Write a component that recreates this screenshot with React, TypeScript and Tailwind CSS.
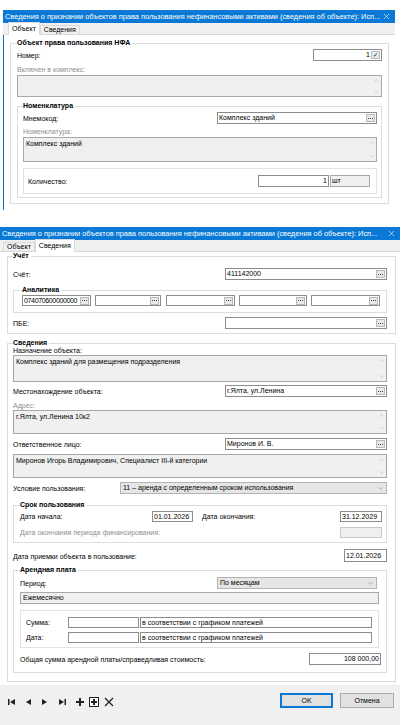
import React from "react";
import { ChevronUp, ChevronDown, X } from "lucide-react";

type Kids = { children?: React.ReactNode; className?: string };

function TitleBar({ text }: { text: string }) {
  return (
    <div className="flex h-[13px] items-center justify-between bg-[#0a79d6] pl-[2px] pr-[4px] text-white">
      <span className="overflow-hidden whitespace-nowrap text-[7.4px] leading-[8px]">{text}</span>
      <X size={9} strokeWidth={1.6} className="shrink-0" />
    </div>
  );
}

function Tabs({ active, offset }: { active: 0 | 1; offset: string }) {
  const tabs = ["Объект", "Сведения"];
  return (
    <div className={`flex h-[12px] items-end border-b border-[#d9d9d9] bg-[#f0f0f0] ${offset}`}>
      {tabs.map((t, i) =>
        i === active ? (
          <div
            key={t}
            className="relative -mb-[1px] flex h-[13px] items-center border border-b-0 border-[#d9d9d9] bg-white px-[3px] leading-[8px]"
          >
            {t}
          </div>
        ) : (
          <div
            key={t}
            className="flex h-[9px] items-center border border-b-0 border-[#d9d9d9] bg-[#f0f0f0] px-[3px] leading-[8px]"
          >
            {t}
          </div>
        )
      )}
    </div>
  );
}

function Group({ title, children, className = "" }: Kids & { title: string }) {
  return (
    <fieldset className={`border border-[#dcdcdc] ${className}`}>
      <legend className="h-[8px] pr-[2px] font-bold leading-[8px]">{title}</legend>
      {children}
    </fieldset>
  );
}

function Dots() {
  return (
    <span className="mr-[1px] flex h-[8px] w-[9px] shrink-0 items-center justify-center border border-[#b8b8b8] bg-[#e9e9e9]">
      <svg width="5" height="1" viewBox="0 0 5 1">
        <rect x="0" width="1" height="1" fill="#444" />
        <rect x="2" width="1" height="1" fill="#444" />
        <rect x="4" width="1" height="1" fill="#444" />
      </svg>
    </span>
  );
}

function Input({
  value = "",
  className = "",
  textClass = "",
  dots,
  right,
  disabled,
}: {
  value?: string;
  className?: string;
  textClass?: string;
  dots?: boolean;
  right?: boolean;
  disabled?: boolean;
}) {
  return (
    <div
      className={`flex shrink-0 items-center border ${
        disabled ? "border-[#c8c8c8] bg-[#f0f0f0]" : "border-[#8c8c8c] bg-white"
      } ${className}`}
    >
      <span
        className={`flex-1 overflow-hidden whitespace-nowrap px-[1px] leading-[8px] ${
          right ? "text-right" : ""
        } ${textClass}`}
      >
        {value}
      </span>
      {dots && <Dots />}
    </div>
  );
}

function Memo({ text = "", className = "" }: { text?: string; className?: string }) {
  return (
    <div className={`flex border border-[#a8a8a8] bg-[#f0f0f0] ${className}`}>
      <span className="flex-1 px-[2px] pt-[2px] leading-[8px]">{text}</span>
      <div className="flex w-[9px] flex-col items-center justify-between py-[1px] text-[#a6a6a6]">
        <ChevronUp size={7} strokeWidth={1.5} />
        <ChevronDown size={7} strokeWidth={1.5} />
      </div>
    </div>
  );
}

function Select({ value, className = "" }: { value: string; className?: string }) {
  return (
    <div className={`flex h-[12px] shrink-0 items-center border border-[#b4b4b4] bg-[#e6e6e6] ${className}`}>
      <span className="flex-1 whitespace-nowrap px-[2px] leading-[8px]">{value}</span>
      <ChevronDown size={7} strokeWidth={1.5} className="mr-[2px] text-[#555]" />
    </div>
  );
}

function Row({ label, children, className = "" }: Kids & { label: string }) {
  return (
    <div className={`flex items-end justify-between ${className}`}>
      <span className="mb-[1px] leading-[8px]">{label}</span>
      {children}
    </div>
  );
}

function Gray({ children, className = "" }: Kids) {
  return <div className={`leading-[8px] text-[#8e8e8e] ${className}`}>{children}</div>;
}

const TITLE =
  "Сведения о признании объектов права пользования нефинансовыми активами (сведения об объекте): Исп...";

function ObjectWindow() {
  return (
    <div className="ml-[3px] mt-[10px] w-[392px]">
      <TitleBar text={TITLE} />
      <Tabs active={0} offset="pl-[5px]" />
      <div className="h-[175px] border-l border-[#0a79d6] bg-white px-[6px] pt-[4px]">
        <Group title="Объект права пользования НФА" className="pb-[5px] pl-[6px] pr-[6px]">
          <Row label="Номер:" className="mt-[2px]">
            <div className="flex h-[12px] w-[69px] items-center border border-[#8c8c8c] bg-white">
              <span className="flex-1 px-[1px] text-right leading-[8px]">1</span>
              <span className="mr-[1px] flex h-[8px] w-[9px] items-center justify-center border border-[#b8b8b8] bg-[#e9e9e9] text-[6px] leading-[6px]">
                ✓
              </span>
            </div>
          </Row>
          <Gray className="mt-[5px]">Включен в комплекс:</Gray>
          <Memo className="mt-[1px] h-[22px]" />
          <Group title="Номенклатура" className="mt-[5px] pb-[3px] pl-[5px] pr-[4px]">
            <Row label="Мнемокод:" className="mt-[2px]">
              <Input value="Комплекс зданий" dots className="h-[12px] w-[160px]" />
            </Row>
            <Gray className="mt-[4px]">Номенклатура:</Gray>
            <Memo text="Комплекс зданий" className="mt-[1px] h-[25px]" />
            <div className="mt-[6px] flex h-[26px] items-end border border-[#e2e2e2] pb-[6px] pl-[4px] pr-[6px]">
              <span className="mb-[1px] flex-1 leading-[8px]">Количество:</span>
              <Input value="1" right className="h-[12px] w-[71px]" />
              <div className="ml-[1px] flex h-[12px] w-[40px] items-center border border-[#a8a8a8] bg-[#f0f0f0] px-[1px] leading-[8px]">
                шт
              </div>
            </div>
          </Group>
        </Group>
      </div>
    </div>
  );
}

function FooterIcon({ children }: Kids) {
  return <span className="flex w-[8px] items-center justify-center">{children}</span>;
}

function DetailsWindow() {
  return (
    <div className="mt-[17px] w-[400px]">
      <TitleBar text={TITLE} />
      <Tabs active={1} offset="pl-[3px]" />
      <div className="h-[433px] bg-white pl-[7px] pr-[4px]">
        <Group title="Учёт" className="pb-[4px] pl-[5px] pr-[8px]">
          <Row label="Счёт:" className="mt-[8px]">
            <Input value="411142000" dots className="h-[12px] w-[162px]" />
          </Row>
          <Group title="Аналитика" className="mt-[6px] pb-[6px] pl-[8px] pr-[6px]">
            <div className="mt-[1px] flex h-[11px] justify-between">
              <Input
                value="074070600000000"
                dots
                className="h-[11px] w-[69px]"
                textClass="tracking-[-0.35px]"
              />
              <Input dots className="h-[11px] w-[66px]" />
              <Input dots className="h-[11px] w-[69px]" />
              <Input dots className="h-[11px] w-[68px]" />
              <Input dots className="h-[11px] w-[69px]" />
            </div>
          </Group>
          <Row label="ПБЕ:" className="mt-[4px]">
            <Input dots className="h-[12px] w-[162px]" />
          </Row>
        </Group>
        <Group title="Сведения" className="mt-[5px] pb-[8px] pl-[5px] pr-[8px]">
          <div className="leading-[8px]">Назначение объекта:</div>
          <Memo text="Комплекс зданий для размещения подразделения" className="h-[27px]" />
          <Row label="Местонахождение объекта:" className="mt-[3px]">
            <Input value="г.Ялта, ул.Ленина" dots className="h-[12px] w-[162px]" />
          </Row>
          <Gray className="mt-[5px]">Адрес:</Gray>
          <Memo text="г.Ялта, ул.Ленина 10к2" className="h-[24px]" />
          <Row label="Ответственное лицо:" className="mt-[4px]">
            <Input value="Миронов И. В." dots className="h-[12px] w-[162px]" />
          </Row>
          <Memo
            text="Миронов Игорь Владимирович, Специалист III-й категории"
            className="mt-[4px] h-[24px]"
          />
          <Row label="Условие пользования:" className="mt-[4px]">
            <Select value="11 – аренда с определенным сроком использования" className="w-[267px]" />
          </Row>
          <Group title="Срок пользования" className="mt-[7px] pb-[4px] pl-[6px] pr-[4px]">
            <div className="mt-[2px] flex items-end">
              <span className="mb-[1px] w-[132px] leading-[8px]">Дата начала:</span>
              <Input value="01.01.2026" className="h-[11px] w-[41px]" />
              <span className="mb-[1px] ml-[9px] flex-1 leading-[8px]">Дата окончания:</span>
              <Input value="31.12.2029" className="h-[11px] w-[42px]" />
            </div>
            <div className="mt-[5px] flex items-end justify-between">
              <Gray className="mb-[1px]">Дата окончания периода финансирования:</Gray>
              <Input disabled className="h-[11px] w-[42px]" />
            </div>
          </Group>
          <Row label="Дата приемки объекта в пользование:" className="mt-[6px]">
            <Input value="12.01.2026" className="h-[13px] w-[43px]" />
          </Row>
          <Group title="Арендная плата" className="mt-[4px] pb-[7px] pl-[6px] pr-[5px]">
            <Row label="Период:" className="mt-[3px]">
              <Select value="По месяцам" className="mr-[4px] w-[160px]" />
            </Row>
            <div className="mr-[2px] mt-[3px] flex h-[12px] items-center border border-[#a8a8a8] bg-[#f0f0f0] px-[2px] leading-[8px]">
              Ежемесячно
            </div>
            <div className="mr-[2px] mt-[6px] flex h-[38px] flex-col border border-[#e2e2e2] pl-[5px] pr-[6px] pt-[6px]">
              <div className="flex items-end">
                <span className="mb-[1px] w-[42px] leading-[8px]">Сумма:</span>
                <Input className="h-[11px] w-[71px]" />
                <Input
                  value="в соответствии с графиком платежей"
                  className="ml-[1px] h-[11px] flex-1"
                />
              </div>
              <div className="mt-[4px] flex items-end">
                <span className="mb-[1px] w-[42px] leading-[8px]">Дата:</span>
                <Input className="h-[11px] w-[71px]" />
                <Input
                  value="в соответствии с графиком платежей"
                  className="ml-[1px] h-[11px] flex-1"
                />
              </div>
            </div>
            <Row label="Общая сумма арендной платы/справедливая стоимость:" className="mt-[5px]">
              <Input value="108 000,00" right className="h-[12px] w-[72px]" />
            </Row>
          </Group>
        </Group>
      </div>
      <div className="h-[40px] bg-[#f0f0f0] pl-[7px] pr-[6px] pt-[8px]">
        <div className="flex h-[15px] items-center">
          <div className="mt-[2px] flex items-center gap-[9px]">
            <FooterIcon>
              <svg width="7" height="6" viewBox="0 0 7 6">
                <rect x="0" y="0" width="1.5" height="6" fill="#222" />
                <path d="M7 0 L2 3 L7 6Z" fill="#222" />
              </svg>
            </FooterIcon>
            <FooterIcon>
              <svg width="6" height="6" viewBox="0 0 6 6">
                <path d="M6 0 L1 3 L6 6Z" fill="#222" />
              </svg>
            </FooterIcon>
            <FooterIcon>
              <svg width="6" height="6" viewBox="0 0 6 6">
                <path d="M0 0 L5 3 L0 6Z" fill="#222" />
              </svg>
            </FooterIcon>
            <FooterIcon>
              <svg width="7" height="6" viewBox="0 0 7 6">
                <path d="M0 0 L5 3 L0 6Z" fill="#222" />
                <rect x="5.5" y="0" width="1.5" height="6" fill="#222" />
              </svg>
            </FooterIcon>
          </div>
          <div className="ml-[10px] mt-[2px] flex items-center gap-[5px]">
            <svg width="8" height="8" viewBox="0 0 8 8">
              <path d="M3 0h2v3h3v2H5v3H3V5H0V3h3z" fill="#222" />
            </svg>
            <svg width="10" height="10" viewBox="0 0 10 10">
              <rect x="0.5" y="0.5" width="9" height="9" fill="#fff" stroke="#222" />
              <path d="M4 2h2v2h2v2H6v2H4V6H2V4h2z" fill="#222" />
            </svg>
            <svg width="10" height="10" viewBox="0 0 10 10">
              <path d="M1 1 L9 9 M9 1 L1 9" stroke="#222" strokeWidth="1.3" />
            </svg>
          </div>
          <div className="flex-1" />
          <button className="flex h-[15px] w-[53px] items-center justify-center border border-[#0a79d6] bg-[#e1e1e1] leading-[8px] shadow-[inset_0_0_0_1px_#0a79d6]">
            OK
          </button>
          <button className="ml-[7px] flex h-[15px] w-[54px] items-center justify-center border border-[#adadad] bg-[#e1e1e1] leading-[8px]">
            Отмена
          </button>
        </div>
      </div>
    </div>
  );
}

export default function App() {
  return (
    <div className="h-[725px] w-[408px] overflow-hidden bg-white font-['Liberation_Sans',Arial,sans-serif] text-[7px] text-black">
      <ObjectWindow />
      <DetailsWindow />
    </div>
  );
}
